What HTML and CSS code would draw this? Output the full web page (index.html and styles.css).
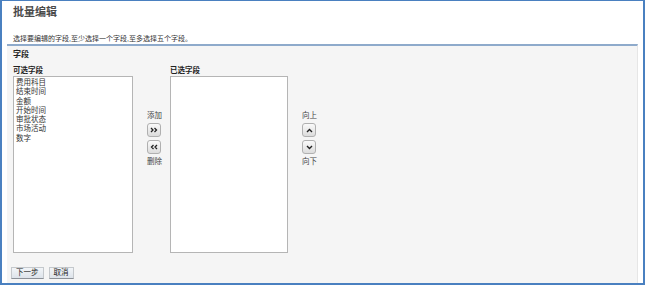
FILE: index.html
```html
<!DOCTYPE html>
<html lang="zh-CN">
<head>
    <meta charset="UTF-8">
    <title>批量编辑</title>
    <link rel="stylesheet" href="styles.css">
</head>
<body>

    <div class="frame">
        <h1 class="title">批量编辑</h1>
        <p class="hint">选择要编辑的字段,至少选择一个字段,至多选择五个字段。</p>

        <!-- Field panel -->
        <div class="panel">
            <h2 class="panel-title">字段</h2>

            <div class="picker">
                <div class="list-col">
                    <div class="list-label">可选字段</div>
                    <div class="listbox available">
                        <div class="option">费用科目</div>
                        <div class="option">结束时间</div>
                        <div class="option">金额</div>
                        <div class="option">开始时间</div>
                        <div class="option">审批状态</div>
                        <div class="option">市场活动</div>
                        <div class="option">数字</div>
                    </div>
                </div>

                <div class="move-col">
                    <span class="move-label">添加</span>
                    <button class="icon-btn">
                        <svg width="8" height="6" viewBox="0 0 8 6"><path d="M1 1 L3 3 L1 5 M4.5 1 L6.5 3 L4.5 5" fill="none" stroke="#222" stroke-width="1.3"/></svg>
                    </button>
                    <button class="icon-btn">
                        <svg width="8" height="6" viewBox="0 0 8 6"><path d="M3.5 1 L1.5 3 L3.5 5 M7 1 L5 3 L7 5" fill="none" stroke="#222" stroke-width="1.3"/></svg>
                    </button>
                    <span class="move-label">删除</span>
                </div>

                <div class="list-col">
                    <div class="list-label">已选字段</div>
                    <div class="listbox selected"></div>
                </div>

                <div class="move-col">
                    <span class="move-label">向上</span>
                    <button class="icon-btn">
                        <svg width="7" height="5" viewBox="0 0 7 5"><path d="M1 4 L3.5 1.5 L6 4" fill="none" stroke="#222" stroke-width="1.4"/></svg>
                    </button>
                    <button class="icon-btn">
                        <svg width="7" height="5" viewBox="0 0 7 5"><path d="M1 1 L3.5 3.5 L6 1" fill="none" stroke="#222" stroke-width="1.4"/></svg>
                    </button>
                    <span class="move-label">向下</span>
                </div>
            </div>

            <div class="actions">
                <button class="btn">下一步</button>
                <button class="btn">取消</button>
            </div>
        </div>
    </div>

</body>
</html>
```

FILE: styles.css
```css
body {
    margin: 0;
    padding: 0;
    background: white;
    font-family: "Liberation Sans", "Noto Sans CJK SC", sans-serif;
    color: #333;
}

/* Outer window */
.frame {
    width: 645px;
    height: 285px;
    box-sizing: border-box;
    border: 2px solid #4a80c0;
    border-top-width: 1px;
    display: flex;
    flex-direction: column;
}

.title {
    margin: 0;
    padding: 4px 0 0 11px;
    font-size: 11px;
    line-height: 14px;
    font-weight: bold;
    color: #4a4a4a;
}

.hint {
    margin: 15px 0 1px 11px;
    font-size: 7px;
    line-height: 9px;
    color: #333;
}

/* Field panel */
.panel {
    flex: 1;
    margin: 0 5px 0 5px;
    padding: 4px 6px 0 6px;
    background: #f5f5f5;
    border-top: 2px solid #8eaacb;
    border-right: 1px solid #e6e6e6;
}

.panel-title {
    margin: 0;
    font-size: 8px;
    line-height: 10px;
    font-weight: bold;
    color: #222;
}

.picker {
    display: flex;
    margin-top: 6px;
}

.list-label {
    font-size: 7.5px;
    line-height: 10px;
    font-weight: bold;
    color: #222;
}

.listbox {
    height: 177px;
    box-sizing: border-box;
    border: 1px solid #b5b5b5;
    background: white;
    padding: 1px 2px;
}

.available {
    width: 120px;
}

.selected {
    width: 118px;
}

.option {
    font-size: 7.5px;
    line-height: 9.3px;
    color: #333;
}

/* Add / remove and up / down columns */
.move-col {
    width: 37px;
    padding: 45px 0 0 14px;
    box-sizing: border-box;
    display: flex;
    flex-direction: column;
    align-items: flex-start;
    gap: 3px;
}

.move-label {
    font-size: 7.5px;
    line-height: 9px;
    color: #444;
}

.icon-btn {
    width: 14px;
    height: 14px;
    padding: 0;
    margin: 0;
    border: 1px solid #b0b0b0;
    border-radius: 3px;
    background: linear-gradient(#fafafa, #dcdcdc);
    display: flex;
    align-items: center;
    justify-content: center;
}

/* Bottom buttons */
.actions {
    display: flex;
    gap: 5px;
    margin: 14px 0 0 -2px;
}

.btn {
    height: 12px;
    padding: 0 4px;
    border: 1px solid #c4c8cc;
    border-bottom-color: #8c9198;
    background: linear-gradient(#f2f5f8, #dde3ea);
    font-family: "Liberation Sans", "Noto Sans CJK SC", sans-serif;
    font-size: 7.5px;
    line-height: 10px;
    color: #222;
}
```
